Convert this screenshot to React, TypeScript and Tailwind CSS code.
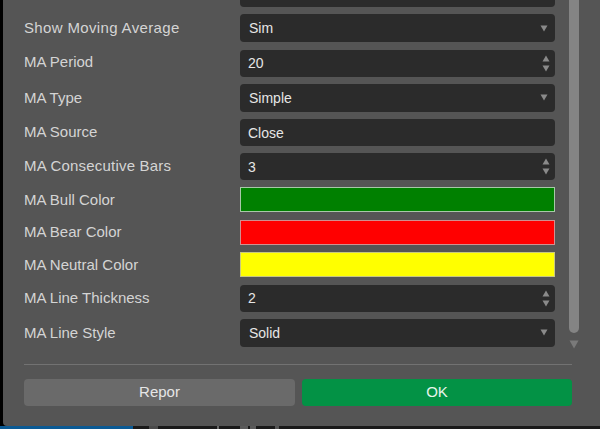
import React from "react";

const Tri = ({ up = false }: { up?: boolean }) => (
  <svg width="8" height="7" viewBox="0 0 8 7" className="block">
    <path d={up ? "M4 0.5L7.5 6.5H0.5Z" : "M0.5 0.5H7.5L4 6.5Z"} fill="#8a8a8a" />
  </svg>
);

const Label = ({ children, cls = "" }: { children: React.ReactNode; cls?: string }) => (
  <div className={`w-[216px] shrink-0 text-[15px] leading-[18px] text-[#d4d4d4] ${cls}`}>{children}</div>
);

const Select = ({ label, value, cls = "" }: { label: string; value: string; cls?: string }) => (
  <div className="flex items-center h-[28px] mb-[7.5px]">
    <Label cls={cls}>{label}</Label>
    <div className="flex-1 h-[28px] rounded-[4px] bg-[#2b2b2b] flex items-center justify-between pl-[9px] pr-[7px] text-[14px] text-[#e6e6e6]">
      <span className="pt-[1px]">{value}</span>
      <Tri />
    </div>
  </div>
);

const NumberRow = ({ label, value, cls = "" }: { label: string; value: string; cls?: string }) => (
  <div className="flex items-center h-[27px] mb-[7px]">
    <Label cls={cls}>{label}</Label>
    <div className="flex-1 h-[27px] rounded-[4px] bg-[#2b2b2b] flex items-center justify-between pl-[8px] pr-[5px] text-[14px] text-[#e6e6e6]">
      <span className="pt-[1px]">{value}</span>
      <div className="flex flex-col gap-[3px]">
        <Tri up />
        <Tri />
      </div>
    </div>
  </div>
);

const TextRow = ({ label, value }: { label: string; value: string }) => (
  <div className="flex items-center h-[27px] mb-[7px]">
    <Label cls="-mt-[2px]">{label}</Label>
    <div className="flex-1 h-[27px] rounded-[4px] bg-[#2b2b2b] flex items-center pl-[8px] text-[14px] text-[#e6e6e6]">
      <span className="pt-[1px]">{value}</span>
    </div>
  </div>
);

const ColorRow = ({ label, color, edge }: { label: string; color: string; edge: string }) => (
  <div className="flex items-center h-[25px] mb-[7.5px]">
    <Label>{label}</Label>
    <div className={`flex-1 h-[25px] border ${color} ${edge}`} />
  </div>
);

export default function App() {
  return (
    <div className="relative w-[600px] h-[429px] overflow-hidden bg-[#1a1a1a] font-['Liberation_Sans',Arial,sans-serif]">
      <div className="absolute left-0 top-[426px] w-[133px] h-[3px] bg-[#0b5a94]" />
      <div className="absolute left-[149px] top-[426px] w-[9px] h-[3px] bg-[#4a4a4a]" />
      <div className="absolute left-[217px] top-[426px] w-[2px] h-[3px] bg-[#6a6a6a]" />
      <div className="absolute left-[240px] top-[426px] w-[8px] h-[3px] bg-[#5a5a5a]" />
      <div className="absolute left-[250px] top-[426px] w-[6px] h-[3px] bg-[#5a5a5a]" />
      <div className="absolute left-[275px] top-[426px] w-[4px] h-[3px] bg-[#555555]" />
      <div className="absolute left-0 top-0 w-[600px] h-[426px] bg-black">
        <div className="ml-[3px] h-[426px] rounded-bl-[4px] bg-[#555555] overflow-hidden flex flex-col">
          <div className="flex h-[358px] shrink-0 overflow-hidden">
            <div className="w-[552px] pl-[21px] shrink-0 overflow-hidden">
              <div className="-mt-[21.5px]">
                <Select label="" value="" />
                <Select label="Show Moving Average" value="Sim" cls="tracking-[0.35px]" />
                <NumberRow label="MA Period" value="20" cls="-mt-[2px]" />
                <Select label="MA Type" value="Simple" />
                <TextRow label="MA Source" value="Close" />
                <NumberRow label="MA Consecutive Bars" value="3" cls="-mt-[2px] tracking-[0.2px]" />
                <ColorRow label="MA Bull Color" color="bg-[#008000]" edge="border-[#a8c8a8]" />
                <ColorRow label="MA Bear Color" color="bg-[#ff0000]" edge="border-[#d09090]" />
                <ColorRow label="MA Neutral Color" color="bg-[#ffff00]" edge="border-[#c8c880]" />
                <NumberRow label="MA Line Thickness" value="2" />
                <Select label="MA Line Style" value="Solid" />
              </div>
            </div>
            <div className="ml-[14px] w-[10px] flex flex-col items-center">
              <div className="w-[10px] h-[333px] shrink-0 rounded-b-[5px] bg-[#848484]" />
              <div className="mt-[7px]">
                <svg width="10" height="9" viewBox="0 0 10 9" className="block">
                  <path d="M0.5 0.5H9.5L5 8.5Z" fill="#7a7a7a" />
                </svg>
              </div>
            </div>
          </div>
          <div className="ml-[21px] w-[548px] h-px mt-[6px] bg-[#727272]" />
          <div className="ml-[21px] w-[548px] mt-[14px] flex gap-[7px]">
            <div className="w-[271px] h-[27px] rounded-[4px] bg-[#6a6a6a] flex items-center justify-center text-[15px] text-[#e6e6e6]">
              Repor
            </div>
            <div className="w-[270px] h-[27px] rounded-[4px] bg-[#039245] flex items-center justify-center text-[15px] text-[#e8f5ec]">
              OK
            </div>
          </div>
        </div>
      </div>
    </div>
  );
}
